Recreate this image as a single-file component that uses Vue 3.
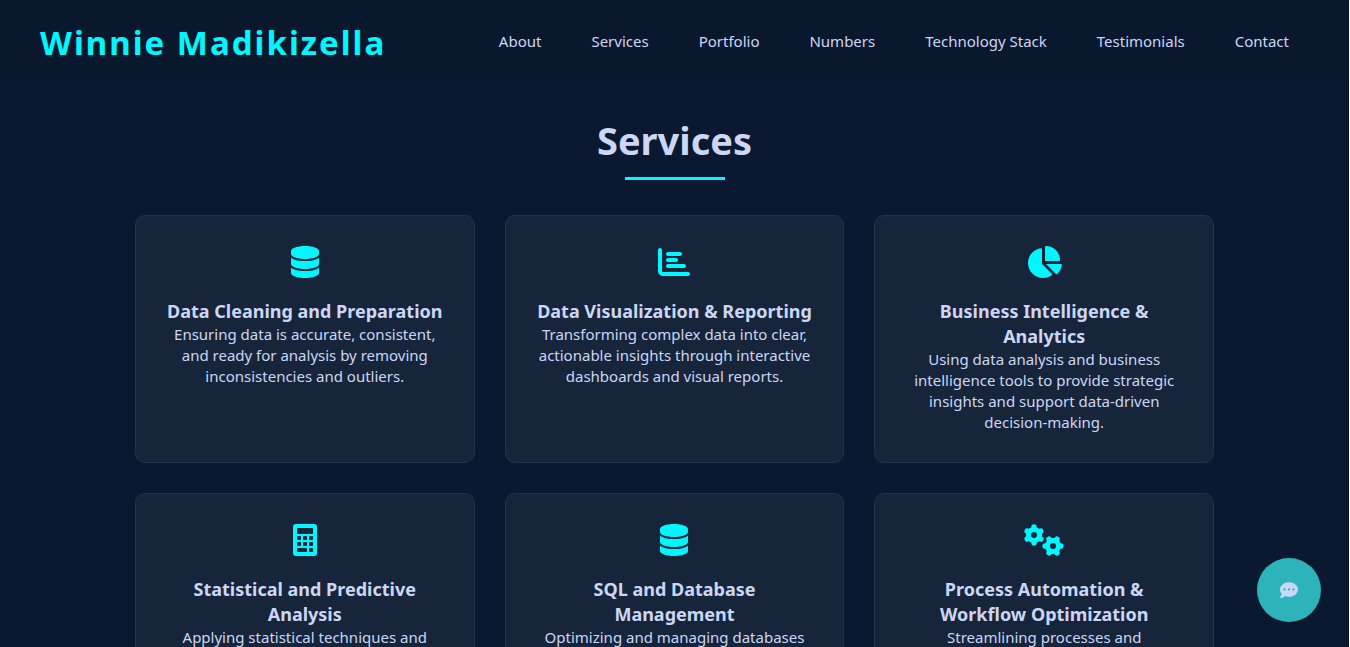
<script setup>
const links = ['About', 'Services', 'Portfolio', 'Numbers', 'Technology Stack', 'Testimonials', 'Contact']

const database = {
  width: 448,
  path: 'M448 80v48c0 44.2-100.3 80-224 80S0 172.2 0 128V80C0 35.8 100.3 0 224 0S448 35.8 448 80zM393.2 214.7c20.8-7.4 39.9-16.9 54.8-28.6V288c0 44.2-100.3 80-224 80S0 332.2 0 288V186.1c14.9 11.8 34 21.2 54.8 28.6C99.7 230.7 159.5 240 224 240s124.3-9.3 169.2-25.3zM0 346.1c14.9 11.8 34 21.2 54.8 28.6C99.7 390.7 159.5 400 224 400s124.3-9.3 169.2-25.3c20.8-7.4 39.9-16.9 54.8-28.6V432c0 44.2-100.3 80-224 80S0 476.2 0 432V346.1z'
}
const chartBar = {
  width: 512,
  path: 'M32 32c17.7 0 32 14.3 32 32V400c0 8.8 7.2 16 16 16H480c17.7 0 32 14.3 32 32s-14.3 32-32 32H80c-44.2 0-80-35.8-80-80V64C0 46.3 14.3 32 32 32zm96 96c0-17.7 14.3-32 32-32H352c17.7 0 32 14.3 32 32s-14.3 32-32 32H160c-17.7 0-32-14.3-32-32zm32 64H288c17.7 0 32 14.3 32 32s-14.3 32-32 32H160c-17.7 0-32-14.3-32-32s14.3-32 32-32zm0 96H416c17.7 0 32 14.3 32 32s-14.3 32-32 32H160c-17.7 0-32-14.3-32-32s14.3-32 32-32z'
}
const chartPie = {
  width: 576,
  path: 'M304 240V16.6c0-9 7-16.6 16-16.6C443.7 0 544 100.3 544 224c0 9-7.6 16-16.6 16H304zM32 272C32 150.7 122.1 50.3 239 34.3c9.2-1.3 17 6.1 17 15.4V288L412.5 444.5c6.7 6.7 6.2 17.7-1.5 23.1C371.8 495.6 323.8 512 272 512C139.5 512 32 404.6 32 272zm526.4 16c9.3 0 16.6 7.8 15.4 17c-7.7 55.9-34.6 105.6-73.9 142.3c-6 5.6-15.4 5.2-21.2-.7L320 288H558.4z'
}
const calculator = {
  width: 384,
  path: 'M48 0H336a48 48 0 0 1 48 48V464a48 48 0 0 1-48 48H48a48 48 0 0 1-48-48V48A48 48 0 0 1 48 0zM76 64a12 12 0 0 0-12 12V148a12 12 0 0 0 12 12H308a12 12 0 0 0 12-12V76a12 12 0 0 0-12-12zM76 192a12 12 0 0 0-12 12V244a12 12 0 0 0 12 12H116a12 12 0 0 0 12-12V204a12 12 0 0 0-12-12zM172 192a12 12 0 0 0-12 12V244a12 12 0 0 0 12 12H212a12 12 0 0 0 12-12V204a12 12 0 0 0-12-12zM268 192a12 12 0 0 0-12 12V244a12 12 0 0 0 12 12H308a12 12 0 0 0 12-12V204a12 12 0 0 0-12-12zM76 288a12 12 0 0 0-12 12V340a12 12 0 0 0 12 12H116a12 12 0 0 0 12-12V300a12 12 0 0 0-12-12zM172 288a12 12 0 0 0-12 12V340a12 12 0 0 0 12 12H212a12 12 0 0 0 12-12V300a12 12 0 0 0-12-12zM268 288a12 12 0 0 0-12 12V340a12 12 0 0 0 12 12H308a12 12 0 0 0 12-12V300a12 12 0 0 0-12-12zM76 384a12 12 0 0 0-12 12V436a12 12 0 0 0 12 12H212a12 12 0 0 0 12-12V396a12 12 0 0 0-12-12zM268 384a12 12 0 0 0-12 12V436a12 12 0 0 0 12 12H308a12 12 0 0 0 12-12V396a12 12 0 0 0-12-12z'
}
const gears = {
  width: 640,
  path: 'M308.5 135.3c7.1-6.3 9.9-16.2 6.2-25c-2.3-5.3-4.8-10.5-7.6-15.5L304 89.4c-3-5-6.3-9.9-9.8-14.6c-5.7-7.6-15.7-10.1-24.7-7.1l-28.2 9.3c-10.7-8.8-23-16-36.2-20.9L199 27.1c-1.9-9.3-9.1-16.7-18.5-17.8C173.9 8.4 167.2 8 160.4 8h-.7c-6.8 0-13.5 .4-20.1 1.2c-9.4 1.1-16.6 8.6-18.5 17.8L115 56.1c-13.3 5-25.5 12.1-36.2 20.9L50.5 67.8c-9-3-19-.5-24.7 7.1c-3.5 4.7-6.8 9.6-9.9 14.6l-3 5.3c-2.8 5-5.3 10.2-7.6 15.6c-3.7 8.7-.9 18.6 6.2 25l22.2 19.8C32.6 161.9 32 168.9 32 176s.6 14.1 1.7 20.9L11.5 216.7c-7.1 6.3-9.9 16.2-6.2 25c2.3 5.3 4.8 10.5 7.6 15.6l3 5.2c3 5.1 6.3 9.9 9.9 14.6c5.7 7.6 15.7 10.1 24.7 7.1l28.2-9.3c10.7 8.8 23 16 36.2 20.9l6.1 29.1c1.9 9.3 9.1 16.7 18.5 17.8c6.7 .8 13.5 1.2 20.4 1.2s13.7-.4 20.4-1.2c9.4-1.1 16.6-8.6 18.5-17.8l6.1-29.1c13.3-5 25.5-12.1 36.2-20.9l28.2 9.3c9 3 19 .5 24.7-7.1c3.5-4.7 6.8-9.5 9.8-14.6l3.1-5.4c2.8-5 5.3-10.2 7.6-15.5c3.7-8.7 .9-18.6-6.2-25l-22.2-19.8c1.1-6.8 1.7-13.8 1.7-20.9s-.6-14.1-1.7-20.9l22.2-19.8zM112 176a48 48 0 1 1 96 0a48 48 0 1 1-96 0z',
  secondGear: 'translate(464 352) rotate(90) translate(-160 -176)'
}

const services = [
  { icon: database, title: 'Data Cleaning and Preparation', text: 'Ensuring data is accurate, consistent, and ready for analysis by removing inconsistencies and outliers.' },
  { icon: chartBar, title: 'Data Visualization & Reporting', text: 'Transforming complex data into clear, actionable insights through interactive dashboards and visual reports.' },
  { icon: chartPie, title: 'Business Intelligence & Analytics', text: 'Using data analysis and business intelligence tools to provide strategic insights and support data-driven decision-making.' },
  { icon: calculator, title: 'Statistical and Predictive Analysis', text: 'Applying statistical techniques and' },
  { icon: database, title: 'SQL and Database Management', text: 'Optimizing and managing databases' },
  { icon: gears, title: 'Process Automation & Workflow Optimization', text: 'Streamlining processes and' }
]
</script>

<template>
  <div class="page">
    <header class="header">
      <a class="logo" href="#">Winnie Madikizella</a>
      <nav class="nav" aria-label="Main">
        <a v-for="link in links" :key="link" href="#">{{ link }}</a>
      </nav>
    </header>

    <main class="services">
      <h2>Services</h2>
      <div class="grid">
        <article v-for="service in services" :key="service.title" class="card">
          <svg class="icon" :viewBox="`0 0 ${service.icon.width} 512`" aria-hidden="true">
            <path :d="service.icon.path" fill-rule="evenodd" />
            <path v-if="service.icon.secondGear" :d="service.icon.path" :transform="service.icon.secondGear" fill-rule="evenodd" />
          </svg>
          <h3>{{ service.title }}</h3>
          <p>{{ service.text }}</p>
        </article>
      </div>
    </main>

    <button class="chat" type="button" aria-label="Open chat">
      <svg viewBox="0 0 512 512" aria-hidden="true">
        <path fill-rule="evenodd" d="M256 448c141.4 0 256-93.1 256-208S397.4 32 256 32S0 125.1 0 240c0 45.1 17.7 86.8 47.7 120.9c-1.9 24.5-11.4 46.3-21.4 62.9c-5.5 9.2-11.1 16.6-15.2 21.6c-2.1 2.5-3.7 4.4-4.9 5.7l-1.6 1.7c-4.6 4.6-5.9 11.4-3.4 17.4c2.5 6 8.3 9.9 14.8 9.9c28.7 0 57.6-8.9 81.6-19.3c22.9-10 42.4-21.9 54.3-30.6c31.8 11.5 67 17.9 104.1 17.9zM128 208a32 32 0 1 1 0 64a32 32 0 1 1 0-64zm128 0a32 32 0 1 1 0 64a32 32 0 1 1 0-64zm96 32a32 32 0 1 1 64 0a32 32 0 1 1-64 0z" />
      </svg>
    </button>
  </div>
</template>

<style>
html {
  overflow: hidden;
}
body {
  background: #0a192f;
}
</style>

<style scoped>
.page {
  height: 100vh;
  overflow: hidden;
  border-right: 1px solid #ffffff;
  background: #0a192f;
  color: #ccd6f6;
  font-family: "Segoe UI", "Noto Sans", sans-serif;
  font-size: 15px;
  line-height: 21px;
}
.header {
  display: flex;
  align-items: center;
  justify-content: space-between;
  height: 83px;
  padding: 0 60px 0 40px;
  background: #0a182e;
}
.logo {
  padding-top: 3px;
  color: #00f7ff;
  font-size: 33px;
  font-weight: 700;
  line-height: 48px;
  letter-spacing: 2px;
  text-decoration: none;
  white-space: nowrap;
}
.nav {
  display: flex;
  gap: 50px;
}
.nav a {
  color: #ccd6f6;
  text-decoration: none;
  white-space: nowrap;
}
.services {
  width: 80%;
  margin: 0 auto;
  padding-top: 32px;
}
h2 {
  display: flex;
  flex-direction: column;
  align-items: center;
  gap: 12px;
  margin: 0 0 35px;
  font-size: 38px;
  line-height: 50px;
}
h2::after {
  content: "";
  width: 100px;
  height: 3px;
  background: #00f7ff;
}
.grid {
  display: grid;
  grid-template-columns: repeat(3, 1fr);
  gap: 30px;
}
.card {
  padding: 30px 30px 29px;
  border: 1px solid #1c3547;
  border-radius: 10px;
  background: #17253a;
  text-align: center;
}
.icon {
  display: block;
  height: 32px;
  margin: 0 auto 21px;
  fill: #00f7ff;
}
h3 {
  margin: 0;
  font-size: 18px;
  line-height: 25px;
}
p {
  margin: 0;
}
.chat {
  position: fixed;
  right: 29px;
  bottom: 25px;
  display: flex;
  align-items: center;
  justify-content: center;
  width: 64px;
  height: 64px;
  padding: 0;
  border: 0;
  border-radius: 50%;
  background: #2db4bb;
}
.chat svg {
  width: 18px;
  height: 18px;
  fill: #ccd6f6;
}
</style>
